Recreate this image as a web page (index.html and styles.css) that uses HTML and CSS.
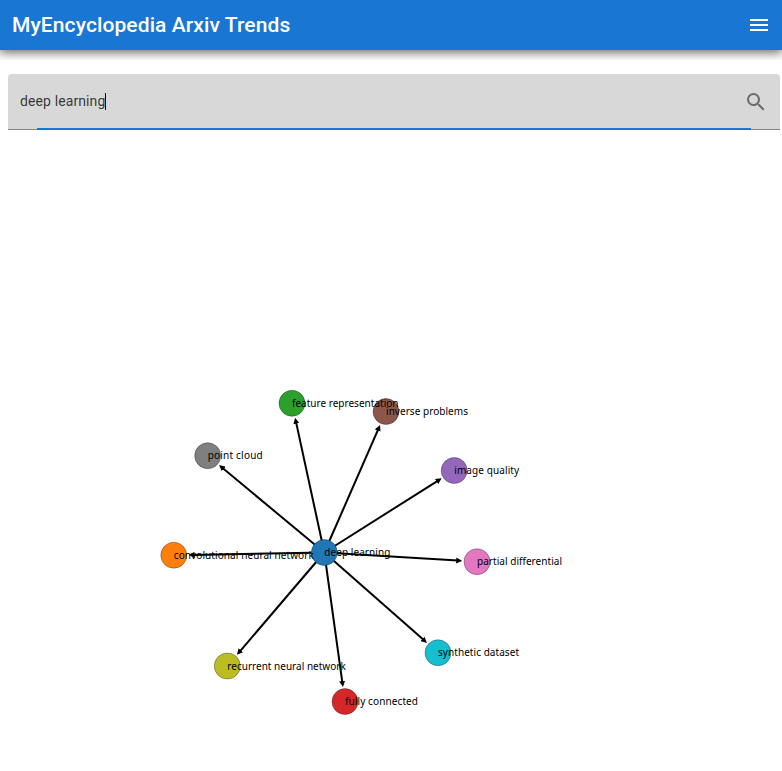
FILE: index.html
```html
<!DOCTYPE html>
<html lang="en">
<head>
<meta charset="utf-8">
<title>MyEncyclopedia Arxiv Trends</title>
<link rel="stylesheet" href="styles.css">
</head>
<body>
<header class="toolbar">
  <h1 class="title">MyEncyclopedia Arxiv Trends</h1>
  <svg class="icon" viewBox="0 0 24 24"><path d="M3 18h18v-2H3v2zm0-5h18v-2H3v2zm0-7v2h18V6H3z"/></svg>
</header>
<main>
  <div class="search">
    <span class="query">deep learning</span><span class="caret"></span>
    <svg class="icon search-icon" viewBox="0 0 24 24"><path d="M15.5 14h-.79l-.28-.27A6.471 6.471 0 0 0 16 9.5 6.5 6.5 0 1 0 9.5 16c1.61 0 3.09-.59 4.23-1.57l.27.28v.79l5 4.99L20.49 19l-4.99-5zm-6 0C7.01 14 5 11.99 5 9.5S7.01 5 9.5 5 14 7.01 14 9.5 11.99 14 9.5 14z"/></svg>
    <span class="focus-line"></span>
  </div>
  <svg class="graph" viewBox="0 130 782 641">
    <defs>
      <marker id="arrow" viewBox="0 -5 10 10" refX="3" markerWidth="3" markerHeight="3" orient="auto"><path class="arrowhead" d="M0,-5L10,0L0,5"/></marker>
    </defs>
    <g class="links">
      <path d="M324.3 552.5L296 421.9"/>
      <path d="M324.3 552.5L378.4 428.9"/>
      <path d="M324.3 552.5L222.3 467.8"/>
      <path d="M324.3 552.5L438.1 480.6"/>
      <path d="M324.3 552.5L192.8 554.9"/>
      <path d="M324.3 552.5L458 560.6"/>
      <path d="M324.3 552.5L423.8 640.1"/>
      <path d="M324.3 552.5L239.7 651.6"/>
      <path d="M324.3 552.5L342.4 682.8"/>
    </g>
    <g class="nodes">
      <circle cx="324.3" cy="552.5" r="13" fill="#1f77b4"/>
      <circle cx="173.8" cy="555.2" r="13" fill="#ff7f0e"/>
      <circle cx="292" cy="403.3" r="13" fill="#2ca02c"/>
      <circle cx="345" cy="701.6" r="13" fill="#d62728"/>
      <circle cx="454.2" cy="470.5" r="13" fill="#9467bd"/>
      <circle cx="386" cy="411.5" r="13" fill="#8c564b"/>
      <circle cx="477" cy="561.7" r="13" fill="#e377c2"/>
      <circle cx="207.7" cy="455.7" r="13" fill="#7f7f7f"/>
      <circle cx="227.3" cy="666" r="13" fill="#bcbd22"/>
      <circle cx="438" cy="652.7" r="13" fill="#17becf"/>
    </g>
    <g class="labels">
      <text x="324.3" y="556" textLength="66">deep learning</text>
      <text x="173.8" y="559" textLength="140">convolutional neural network</text>
      <text x="292" y="407" textLength="106.5">feature representation</text>
      <text x="345" y="705" textLength="73">fully connected</text>
      <text x="454.2" y="474" textLength="65">image quality</text>
      <text x="386" y="415" textLength="82">inverse problems</text>
      <text x="477" y="565" textLength="85">partial differential</text>
      <text x="207.7" y="459" textLength="55">point cloud</text>
      <text x="227.3" y="670" textLength="118.5">recurrent neural network</text>
      <text x="438" y="656" textLength="81">synthetic dataset</text>
    </g>
  </svg>
</main>
</body>
</html>
```
FILE: styles.css
```css
body {
  margin: 0;
  background: #fff;
  font-family: Roboto, sans-serif;
  overflow: hidden;
}
.toolbar {
  display: flex;
  align-items: center;
  justify-content: space-between;
  height: 50px;
  padding: 0 11px 0 12px;
  box-sizing: border-box;
  background: #1976d2;
  color: #fff;
  box-shadow: 0 0 10px 2px rgba(0,0,0,.2), 0 2px 10px rgba(0,0,0,.5);
  clip-path: inset(0 0 -10px 0);
}
.title {
  margin: 0;
  font-size: 21px;
  font-weight: 500;
  letter-spacing: .1px;
}
.icon {
  width: 24px;
  height: 24px;
  fill: currentColor;
}
main {
  display: flow-root;
}
.search {
  position: relative;
  display: flex;
  align-items: center;
  height: 56px;
  margin: 24px 2px 0 8px;
  padding: 0 12px;
  box-sizing: border-box;
  background: #d8d8d8;
  border-bottom: 1px solid #858585;
  border-radius: 4px 4px 0 0;
  color: rgba(0,0,0,.77);
}
.query {
  padding-bottom: 2px;
  font-size: 14px;
  letter-spacing: .11px;
}
.caret {
  width: 1px;
  height: 17px;
  background: #000;
}
.search-icon {
  margin-left: auto;
  color: #6b6b6b;
}
.focus-line {
  position: absolute;
  left: 29px;
  right: 29px;
  bottom: -1px;
  height: 2px;
  background: #1976d2;
}
.graph {
  display: block;
  width: 782px;
  height: 641px;
}
.links path {
  stroke: #000;
  stroke-width: 2;
  marker-end: url(#arrow);
}
.links path,
.arrowhead {
  fill: #000;
}
.nodes circle {
  stroke: rgba(0,0,0,.3);
  stroke-width: 1;
}
.labels {
  font: 10px "Noto Sans", sans-serif;
}
```
